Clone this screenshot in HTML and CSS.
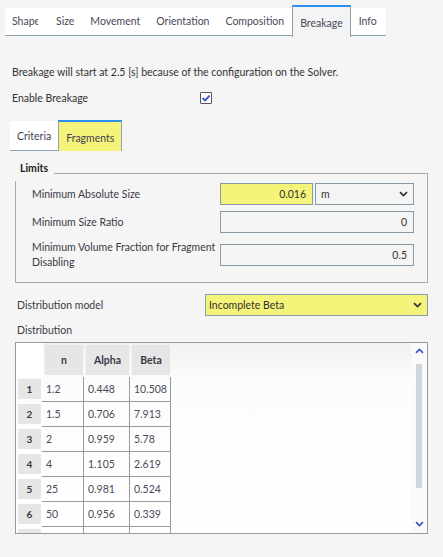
FILE: index.html
```html
<!DOCTYPE html>
<html>
<head>
<meta charset="utf-8">
<link rel="stylesheet" href="styles.css">
</head>
<body>
<div class="tabbar">
  <div class="tab first"><span class="clip">Shape</span></div>
  <div class="tab">Size</div>
  <div class="tab">Movement</div>
  <div class="tab">Orientation</div>
  <div class="tab">Composition</div>
  <div class="tab active">Breakage</div>
  <div class="tab">Info</div>
</div>
<div class="panel">
  <p class="notice">Breakage will start at 2.5 [s] because of the configuration on the Solver.</p>
  <div class="enable-row">
    <span class="enable-label">Enable Breakage</span>
    <span class="checkbox">
      <svg width="10" height="10" viewBox="0 0 10 10"><path d="M1.6 5.0 L4 7.4 L8.6 2.6" fill="none" stroke="#3a56c8" stroke-width="1.9"/></svg>
    </span>
  </div>
  <div class="subtabbar">
    <div class="subtab">Criteria</div>
    <div class="subtab active">Fragments</div>
  </div>
  <div class="subpanel">
    <div class="group">
      <div class="group-title">Limits</div>
      <div class="form-row">
        <span class="flabel">Minimum Absolute Size</span>
        <div class="fields">
          <span class="input short hl">0.016</span>
          <span class="select unit">m<svg class="chev" width="9" height="6" viewBox="0 0 9 6"><path d="M1 1.2 L4.5 4.6 L8 1.2" fill="none" stroke="#333" stroke-width="1.7"/></svg></span>
        </div>
      </div>
      <div class="form-row">
        <span class="flabel">Minimum Size Ratio</span>
        <div class="fields"><span class="input full">0</span></div>
      </div>
      <div class="form-row tall">
        <span class="flabel">Minimum Volume Fraction for Fragment<br>Disabling</span>
        <div class="fields"><span class="input full">0.5</span></div>
      </div>
    </div>
    <div class="dist-row">
      <span class="dlabel">Distribution model</span>
      <span class="select model hl">Incomplete Beta<svg class="chev" width="9" height="6" viewBox="0 0 9 6"><path d="M1 1.2 L4.5 4.6 L8 1.2" fill="none" stroke="#333" stroke-width="1.7"/></svg></span>
    </div>
    <div class="dtitle">Distribution</div>
    <div class="table">
      <div class="grid">
        <div class="thead">
          <div class="corner"></div>
          <div class="hc c1">n</div>
          <div class="hc c2">Alpha</div>
          <div class="hc c3">Beta</div>
        </div>
        <div class="tr"><div class="rh">1</div><div class="td c1">1.2</div><div class="td c2">0.448</div><div class="td c3">10.508</div></div>
        <div class="tr"><div class="rh">2</div><div class="td c1">1.5</div><div class="td c2">0.706</div><div class="td c3">7.913</div></div>
        <div class="tr"><div class="rh">3</div><div class="td c1">2</div><div class="td c2">0.959</div><div class="td c3">5.78</div></div>
        <div class="tr"><div class="rh">4</div><div class="td c1">4</div><div class="td c2">1.105</div><div class="td c3">2.619</div></div>
        <div class="tr"><div class="rh">5</div><div class="td c1">25</div><div class="td c2">0.981</div><div class="td c3">0.524</div></div>
        <div class="tr"><div class="rh">6</div><div class="td c1">50</div><div class="td c2">0.956</div><div class="td c3">0.339</div></div>
        <div class="tr partial"><div class="rh"></div><div class="td c1"></div><div class="td c2"></div><div class="td c3"></div></div>
      </div>
      <div class="scrollbar">
        <svg width="9" height="6" viewBox="0 0 9 6"><path d="M1 4.8 L4.5 1.4 L8 4.8" fill="none" stroke="#3a56c8" stroke-width="1.7"/></svg>
        <div class="thumb"></div>
        <svg width="9" height="6" viewBox="0 0 9 6"><path d="M1 1.2 L4.5 4.6 L8 1.2" fill="none" stroke="#3a56c8" stroke-width="1.7"/></svg>
      </div>
    </div>
  </div>
</div>
</body>
</html>
```

FILE: styles.css
```css
html, body {
  margin: 0;
  padding: 0;
}
body {
  width: 443px;
  height: 557px;
  overflow: hidden;
  background: #f4f4f4;
  font-family: Lato, "Noto Sans", sans-serif;
  font-size: 10.5px;
  color: #333;
}
.tabbar {
  display: flex;
  margin-left: 5px;
  width: 381px;
  height: 28px;
  margin-top: 8px;
  background: #fff;
  border-bottom: 1px solid #8ea2b0;
  box-sizing: border-box;
}
.tab {
  padding: 0 8px;
  line-height: 26px;
  color: #4a4858;
  white-space: nowrap;
}
.tab.first {
  padding-left: 7px;
  padding-right: 10px;
}
.clip {
  display: inline-block;
  width: 26px;
  overflow: hidden;
  vertical-align: top;
}
.tab.active {
  margin-top: -3px;
  height: 32px;
  line-height: 33px;
  border-top: 2px solid #2b8ff0;
  border-left: 1px solid #8ea2b0;
  border-right: 1px solid #8ea2b0;
  box-sizing: border-box;
  background: #f4f4f4;
  padding: 0 7px;
  margin-bottom: -1px;
}
.panel {
  margin-left: 5px;
  width: 428px;
  background: #f5f5f5;
  padding-top: 28px;
  height: 493px;
}
.notice {
  margin: 0 0 0 7px;
  line-height: 16px;
}
.enable-row {
  display: flex;
  align-items: center;
  margin: 9px 0 0 7px;
  height: 18px;
}
.enable-label {
  width: 188px;
}
.checkbox {
  width: 10px;
  height: 10px;
  border: 1px solid #555;
  border-radius: 1px;
  background: #fff;
  display: flex;
  align-items: center;
  justify-content: center;
}
.subtabbar {
  display: flex;
  margin: 13px 0 0 5px;
  height: 31px;
  align-items: flex-end;
}
.subtab {
  height: 30px;
  line-height: 31px;
  padding: 0 7px;
  background: #fff;
  border-bottom: 1px solid #8ea2b0;
  box-sizing: border-box;
  color: #3f3f4f;
}
.subtab.active {
  height: 31px;
  line-height: 32px;
  background: #f4f47a;
  border-top: 2px solid #2b8ff0;
  border-left: 1px solid #8ea2b0;
  border-right: 1px solid #8ea2b0;
  border-bottom: none;
  padding: 0 7px;
}
.subpanel {
  margin-left: 5px;
  width: 418px;
  padding-left: 5px;
  padding-top: 22px;
}
.group {
  position: relative;
  width: 413px;
  box-sizing: border-box;
  border: 1px solid #aaa;
  padding: 9px 0 11px 0;
}
.group-title {
  position: absolute;
  left: -1px;
  top: -13px;
  height: 20px;
  line-height: 15px;
  padding: 0 6px 0 5px;
  background: #f5f5f5;
  font-weight: bold;
  color: #222;
}
.form-row {
  display: flex;
  align-items: center;
  height: 22px;
  margin-bottom: 6px;
  padding-left: 16px;
}
.form-row.tall {
  height: 32px;
  margin-bottom: 0;
}
.flabel {
  width: 188px;
  line-height: 15px;
  white-space: nowrap;
  color: #3a3a46;
}
.fields {
  display: flex;
  gap: 2px;
}
.input {
  height: 22px;
  border: 1px solid #8a9ba8;
  box-sizing: border-box;
  text-align: right;
  padding-right: 6px;
  line-height: 20px;
  background: #f4f4f4;
}
.input.short { width: 93px; }
.input.full { width: 194px; }
.hl { background: #f4f47a; }
.select {
  height: 22px;
  border: 1px solid #8a9ba8;
  box-sizing: border-box;
  display: flex;
  align-items: center;
  justify-content: space-between;
  padding: 0 5px 0 5px;
  background: #f4f4f4;
}
.select.hl { background: #f4f47a; }
.select.unit { width: 99px; }
.dist-row {
  display: flex;
  align-items: center;
  height: 23px;
  margin-top: 10px;
  padding-left: 2px;
}
.dlabel {
  width: 188px;
  color: #3a3a46;
}
.select.model { width: 223px; padding-left: 3px; }
.dtitle {
  padding-left: 2px;
  margin-top: 7px;
  line-height: 14px;
  color: #3a3a46;
}
.table {
  margin-top: 5px;
  width: 413px;
  height: 192px;
  border: 1px solid #999;
  box-sizing: border-box;
  display: flex;
  background: linear-gradient(#f2f2f2, #fafafa 34px, #fcfcfc 35px, #fff);
  overflow: hidden;
}
.grid {
  flex: 1;
}
.thead {
  display: flex;
  height: 34px;
  padding-top: 2px;
  box-sizing: border-box;
}
.corner {
  width: 27px;
  background: #fff;
  margin-top: -2px;
  height: 34px;
}
.hc {
  height: 30px;
  background: #e6e6e6;
  font-weight: bold;
  line-height: 30px;
  text-align: center;
  color: #3a3a46;
}
.hc.c1 { width: 38px; margin-left: 2px; }
.hc.c2 { width: 43px; margin-left: 3px; }
.hc.c3 { width: 38px; margin-left: 3px; }
.tr {
  display: flex;
  height: 25px;
}
.tr.partial { height: 10px; }
.rh {
  width: 23px;
  margin: 2px 1px 3px 2px;
  background: #e6e6e6;
  font-weight: bold;
  font-size: 10px;
  text-align: center;
  line-height: 20px;
  color: #3a3a46;
}
.td {
  border-bottom: 1px solid #999;
  border-right: 1px solid #999;
  box-sizing: border-box;
  padding-left: 4px;
  line-height: 24px;
  color: #4a4a56;
}
.tr.partial .td { border-bottom: none; }
.td.c1 { width: 42px; }
.td.c2 { width: 46px; }
.td.c3 { width: 41px; }
.scrollbar {
  width: 16px;
  display: flex;
  flex-direction: column;
  align-items: center;
  padding-top: 5px;
  background: #fafafa;
}
.thumb {
  width: 6px;
  height: 124px;
  background: #cfd8dc;
  margin: 10px 0 33px 0;
}
```
